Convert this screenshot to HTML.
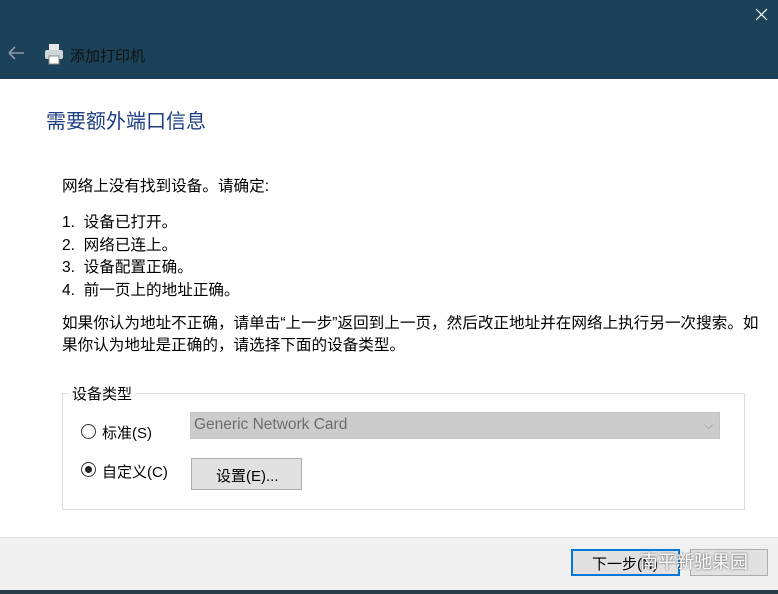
<!DOCTYPE html>
<html><head><meta charset="utf-8"><style>
body{margin:0;width:778px;height:594px;overflow:hidden;background:#fff;font-family:"Liberation Sans","Noto Sans CJK SC",sans-serif;position:relative;color:#000}
.a{position:absolute;white-space:nowrap}
.hdr{position:absolute;left:0;top:0;width:778px;height:79px;background:#1b4259}
.t{font-size:15px}
</style></head><body>
<div class="hdr"></div>
<svg class="a" style="left:755px;top:8px" width="13" height="13"><path d="M1 1L12 12M12 1L1 12" stroke="#fff" stroke-width="1.2"/></svg>
<svg class="a" style="left:7px;top:46px" width="18" height="14"><path d="M2 7H17M2 7L8 1M2 7L8 13" stroke="#8a9aa5" stroke-width="1.6" fill="none"/></svg>
<svg class="a" style="left:43px;top:43px" width="22" height="22"><rect x="6" y="1" width="10" height="6" fill="#e8e8e8"/><rect x="2" y="7" width="18" height="9" rx="2" fill="#cfd4d8"/><rect x="6" y="13" width="10" height="8" fill="#fff" stroke="#888"/></svg>
<div class="a t" style="left:70px;top:45px;color:#111">添加打印机</div>
<div class="a" style="left:46px;top:105px;font-size:20px;color:#1d3f82">需要额外端口信息</div>
<div class="a t" style="left:62px;top:174px;font-size:15.6px">网络上没有找到设备。请确定:</div>
<div class="a t" style="left:62px;top:212px;line-height:22.5px;font-size:15.6px">1.&nbsp;&nbsp;设备已打开。<br>2.&nbsp;&nbsp;网络已连上。<br>3.&nbsp;&nbsp;设备配置正确。<br>4.&nbsp;&nbsp;前一页上的地址正确。</div>
<div class="a t" style="left:62px;top:313px;line-height:22px;font-size:15.6px">如果你认为地址不正确，请单击“上一步”返回到上一页，然后改正地址并在网络上执行另一次搜索。如<br>果你认为地址是正确的，请选择下面的设备类型。</div>
<div class="a" style="left:62px;top:393px;width:681px;height:115px;border:1px solid #dcdcdc"></div>
<div class="a t" style="left:69px;top:383px;background:#fff;padding:0 3px">设备类型</div>
<div class="a" style="left:81px;top:424px;width:13px;height:13px;border:1px solid #333;border-radius:50%"></div>
<div class="a t" style="left:102px;top:422px">标准(S)</div>
<div class="a" style="left:190px;top:412px;width:530px;height:27px;background:#cccccc;border:1px solid #c4c4c4;box-sizing:border-box"></div>
<div class="a" style="left:194px;top:416px;font-size:15.5px;color:#6d6d6d">Generic Network Card</div>
<div class="a" style="left:704px;top:418px;font-size:12px;color:#999">⌵</div>
<div class="a" style="left:81px;top:462px;width:13px;height:13px;border:1px solid #333;border-radius:50%"></div>
<div class="a" style="left:85px;top:466px;width:7px;height:7px;background:#222;border-radius:50%"></div>
<div class="a t" style="left:102px;top:461px">自定义(C)</div>
<div class="a" style="left:191px;top:458px;width:111px;height:32px;background:#e1e1e1;border:1px solid #adadad;box-sizing:border-box"></div>
<div class="a t" style="left:216px;top:465px">设置(E)...</div>
<div class="a" style="left:0;top:537px;width:778px;height:53px;background:#f0f0f0;border-top:1px solid #e2e2e2"></div>
<div class="a" style="left:0;top:590px;width:778px;height:4px;background:#2a3e4a"></div>
<div class="a" style="left:571px;top:549px;width:109px;height:27px;background:#e1e1e1;border:2px solid #0078d7;box-sizing:border-box"></div>
<div class="a" style="left:690px;top:549px;width:78px;height:27px;background:#e1e1e1;border:1px solid #adadad;box-sizing:border-box"></div>
<div class="a t" style="left:592px;top:553px">下一步(N)</div>
<div class="a" style="left:640px;top:548px;font-size:18px;color:#fff;text-shadow:0 0 2px #444">南平新驰果园</div>
</body></html>
